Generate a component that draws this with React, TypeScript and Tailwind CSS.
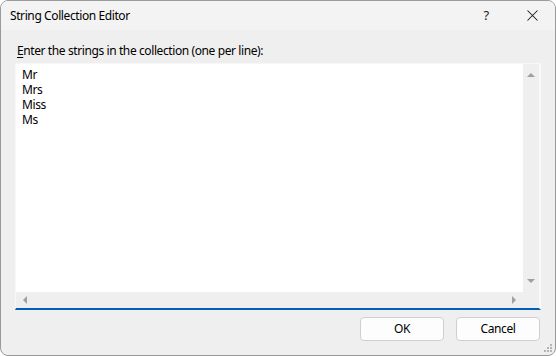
import React from "react";

const font = { fontFamily: '"Segoe UI", "Noto Sans", "Open Sans", sans-serif' };

function Tri({ dir }: { dir: "up" | "down" | "left" | "right" }) {
  const pts = {
    up: "0,5 4,1 8,5",
    down: "0,1 4,5 8,1",
    left: "5,0 1,4 5,8",
    right: "1,0 5,4 1,8",
  }[dir];
  const w = dir === "up" || dir === "down" ? 8 : 6;
  const h = dir === "up" || dir === "down" ? 6 : 8;
  return (
    <svg width={w} height={h} viewBox={`0 0 ${w} ${h}`}>
      <polygon points={pts} fill="#a0a0a0" />
    </svg>
  );
}

export default function App() {
  const lines = ["Mr", "Mrs", "Miss", "Ms"];
  return (
    <div className="w-[556px] h-[356px] bg-white tracking-[-0.4px]" style={font}>
      <div className="relative w-[556px] h-[356px] rounded-[8px] border border-[#9a9a9a] bg-[#efefef] flex flex-col overflow-hidden">
        {/* Title bar */}
        <div className="h-[29px] bg-[#f3f3f3] flex items-center shrink-0">
          <div className="pl-[9px] text-[12px] text-black leading-none flex-1">String Collection Editor</div>
          <div className="w-[46px] h-[29px] flex items-center justify-center text-[13px] text-[#1a1a1a]">?</div>
          <div className="w-[46px] h-[29px] flex items-center justify-center">
            <svg width="11" height="11" viewBox="0 0 11 11">
              <path d="M0.5 0.5 L10.5 10.5 M10.5 0.5 L0.5 10.5" stroke="#1a1a1a" strokeWidth="1.05" />
            </svg>
          </div>
        </div>
        {/* Body */}
        <div className="flex-1 flex flex-col pl-[14px] pr-[14px]">
          <div className="h-[33px] pt-[13px] pl-[2px] text-[12px] leading-[15px] text-black">
            <span className="underline underline-offset-[2px]">E</span>nter the strings in the collection (one per line):
          </div>
          <div className="w-[526px] h-[247px] border-t border-l border-r-2 border-b-2 border-t-[#f7f7f7] border-l-[#f7f7f7] border-r-[#fafafa] border-b-[#005fb8] grid grid-cols-[507px_16px] grid-rows-[228px_16px]">
            <div className="bg-white pl-[6px] pt-[3px] text-[12px] leading-[15px] text-black">
              {lines.map((l) => (
                <div key={l}>{l}</div>
              ))}
            </div>
            <div className="bg-[#efefef] flex flex-col items-center justify-between py-[8px]">
              <Tri dir="up" />
              <Tri dir="down" />
            </div>
            <div className="bg-[#efefef] flex items-center justify-between px-[6px]">
              <Tri dir="left" />
              <Tri dir="right" />
            </div>
            <div className="bg-[#efefef]" />
          </div>
          <div className="flex justify-end gap-[12px] mt-[7px] pr-[1px]">
            <div className="w-[84px] h-[24px] rounded-[4px] border border-[#d0d0d0] bg-[#fdfdfd] flex items-center justify-center text-[12px] text-black">OK</div>
            <div className="w-[84px] h-[24px] rounded-[4px] border border-[#d0d0d0] bg-[#fdfdfd] flex items-center justify-center text-[12px] text-black">Cancel</div>
          </div>
        </div>
        {/* Resize grip */}
        <svg className="absolute right-[2px] bottom-[2px]" width="10" height="10" viewBox="0 0 10 10">
          <rect x="7" y="1" width="2" height="2" fill="#b4b4b4" />
          <rect x="4" y="4" width="2" height="2" fill="#b4b4b4" />
          <rect x="7" y="4" width="2" height="2" fill="#b4b4b4" />
          <rect x="1" y="7" width="2" height="2" fill="#b4b4b4" />
          <rect x="4" y="7" width="2" height="2" fill="#b4b4b4" />
          <rect x="7" y="7" width="2" height="2" fill="#b4b4b4" />
        </svg>
      </div>
    </div>
  );
}
